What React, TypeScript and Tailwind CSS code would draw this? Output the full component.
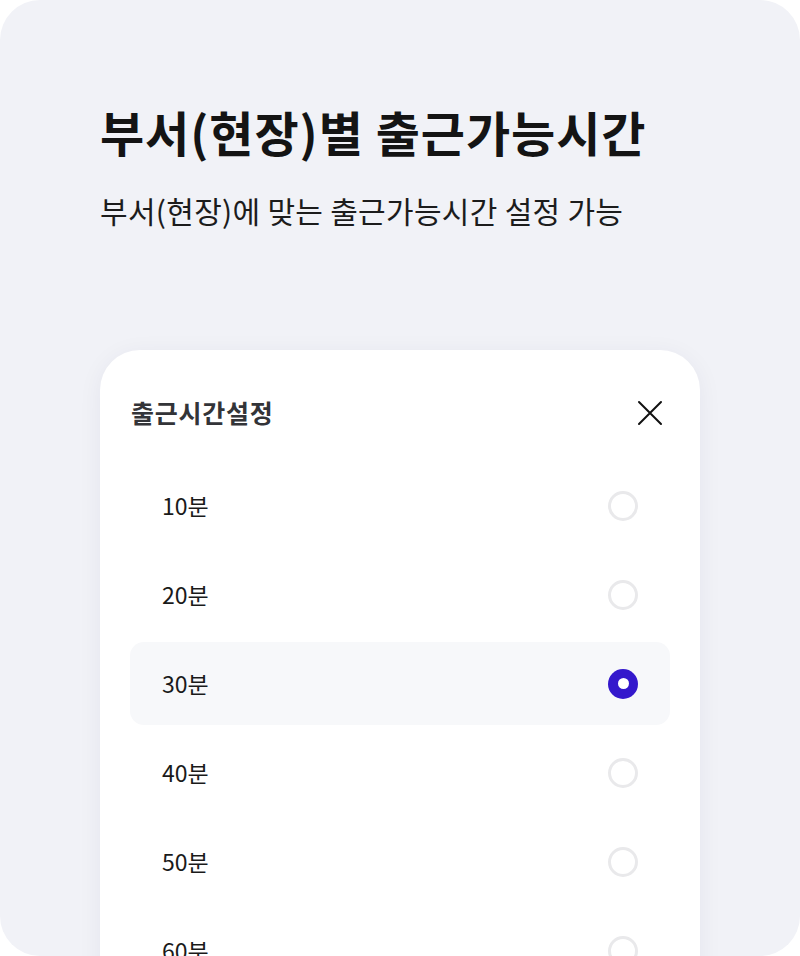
const options = ["10분", "20분", "30분", "40분", "50분", "60분"];

function Radio({ checked }: { checked: boolean }) {
  if (checked) {
    return (
      <span className="flex h-[30px] w-[30px] items-center justify-center rounded-full bg-[#3418cc]">
        <span className="h-[11px] w-[11px] rounded-full bg-white" />
      </span>
    );
  }
  return <span className="h-[30px] w-[30px] rounded-full border-[3px] border-[#e9e9eb] bg-white" />;
}

function CloseIcon() {
  return (
    <svg width="26" height="26" viewBox="0 0 26 26" fill="none" stroke="#111" strokeWidth="2" strokeLinecap="round">
      <path d="M2 2 L24 24 M24 2 L2 24" />
    </svg>
  );
}

export default function App() {
  const selected = "30분";
  return (
    <div
      className="h-[956px] w-[800px] overflow-hidden rounded-[40px] bg-[#f1f2f7]"
      style={{ fontFamily: '"Noto Sans CJK KR", "Noto Sans", sans-serif' }}
    >
      <div className="px-[100px] pt-[98px]">
        <h1 className="whitespace-nowrap text-[48px] font-bold leading-[66px] tracking-[0.02em] text-[#141414]">
          부서(현장)별 출근가능시간
        </h1>
        <p className="mt-[28px] whitespace-nowrap text-[30px] leading-[36px] tracking-[0.01em] text-[#1c1c1c]">
          부서(현장)에 맞는 출근가능시간 설정 가능
        </p>

        <div className="mt-[122px] h-[700px] rounded-[40px] bg-white px-[30px] pt-[35px] shadow-[0_4px_24px_rgba(30,35,80,0.06)]">
          <div className="flex h-[56px] items-center justify-between pl-[1px] pr-[7px]">
            <span className="text-[25px] font-bold tracking-[0.03em] text-[#333438]">출근시간설정</span>
            <CloseIcon />
          </div>
          <ul className="mt-[23px] flex flex-col gap-[6px]">
            {options.map((o) => (
              <li
                key={o}
                className={`flex h-[83px] items-center justify-between rounded-[14px] pl-[32px] pr-[32px] ${
                  o === selected ? "bg-[#f7f8fa]" : ""
                }`}
              >
                <span className="text-[23px] text-[#1a1a1a]">{o}</span>
                <Radio checked={o === selected} />
              </li>
            ))}
          </ul>
        </div>
      </div>
    </div>
  );
}
